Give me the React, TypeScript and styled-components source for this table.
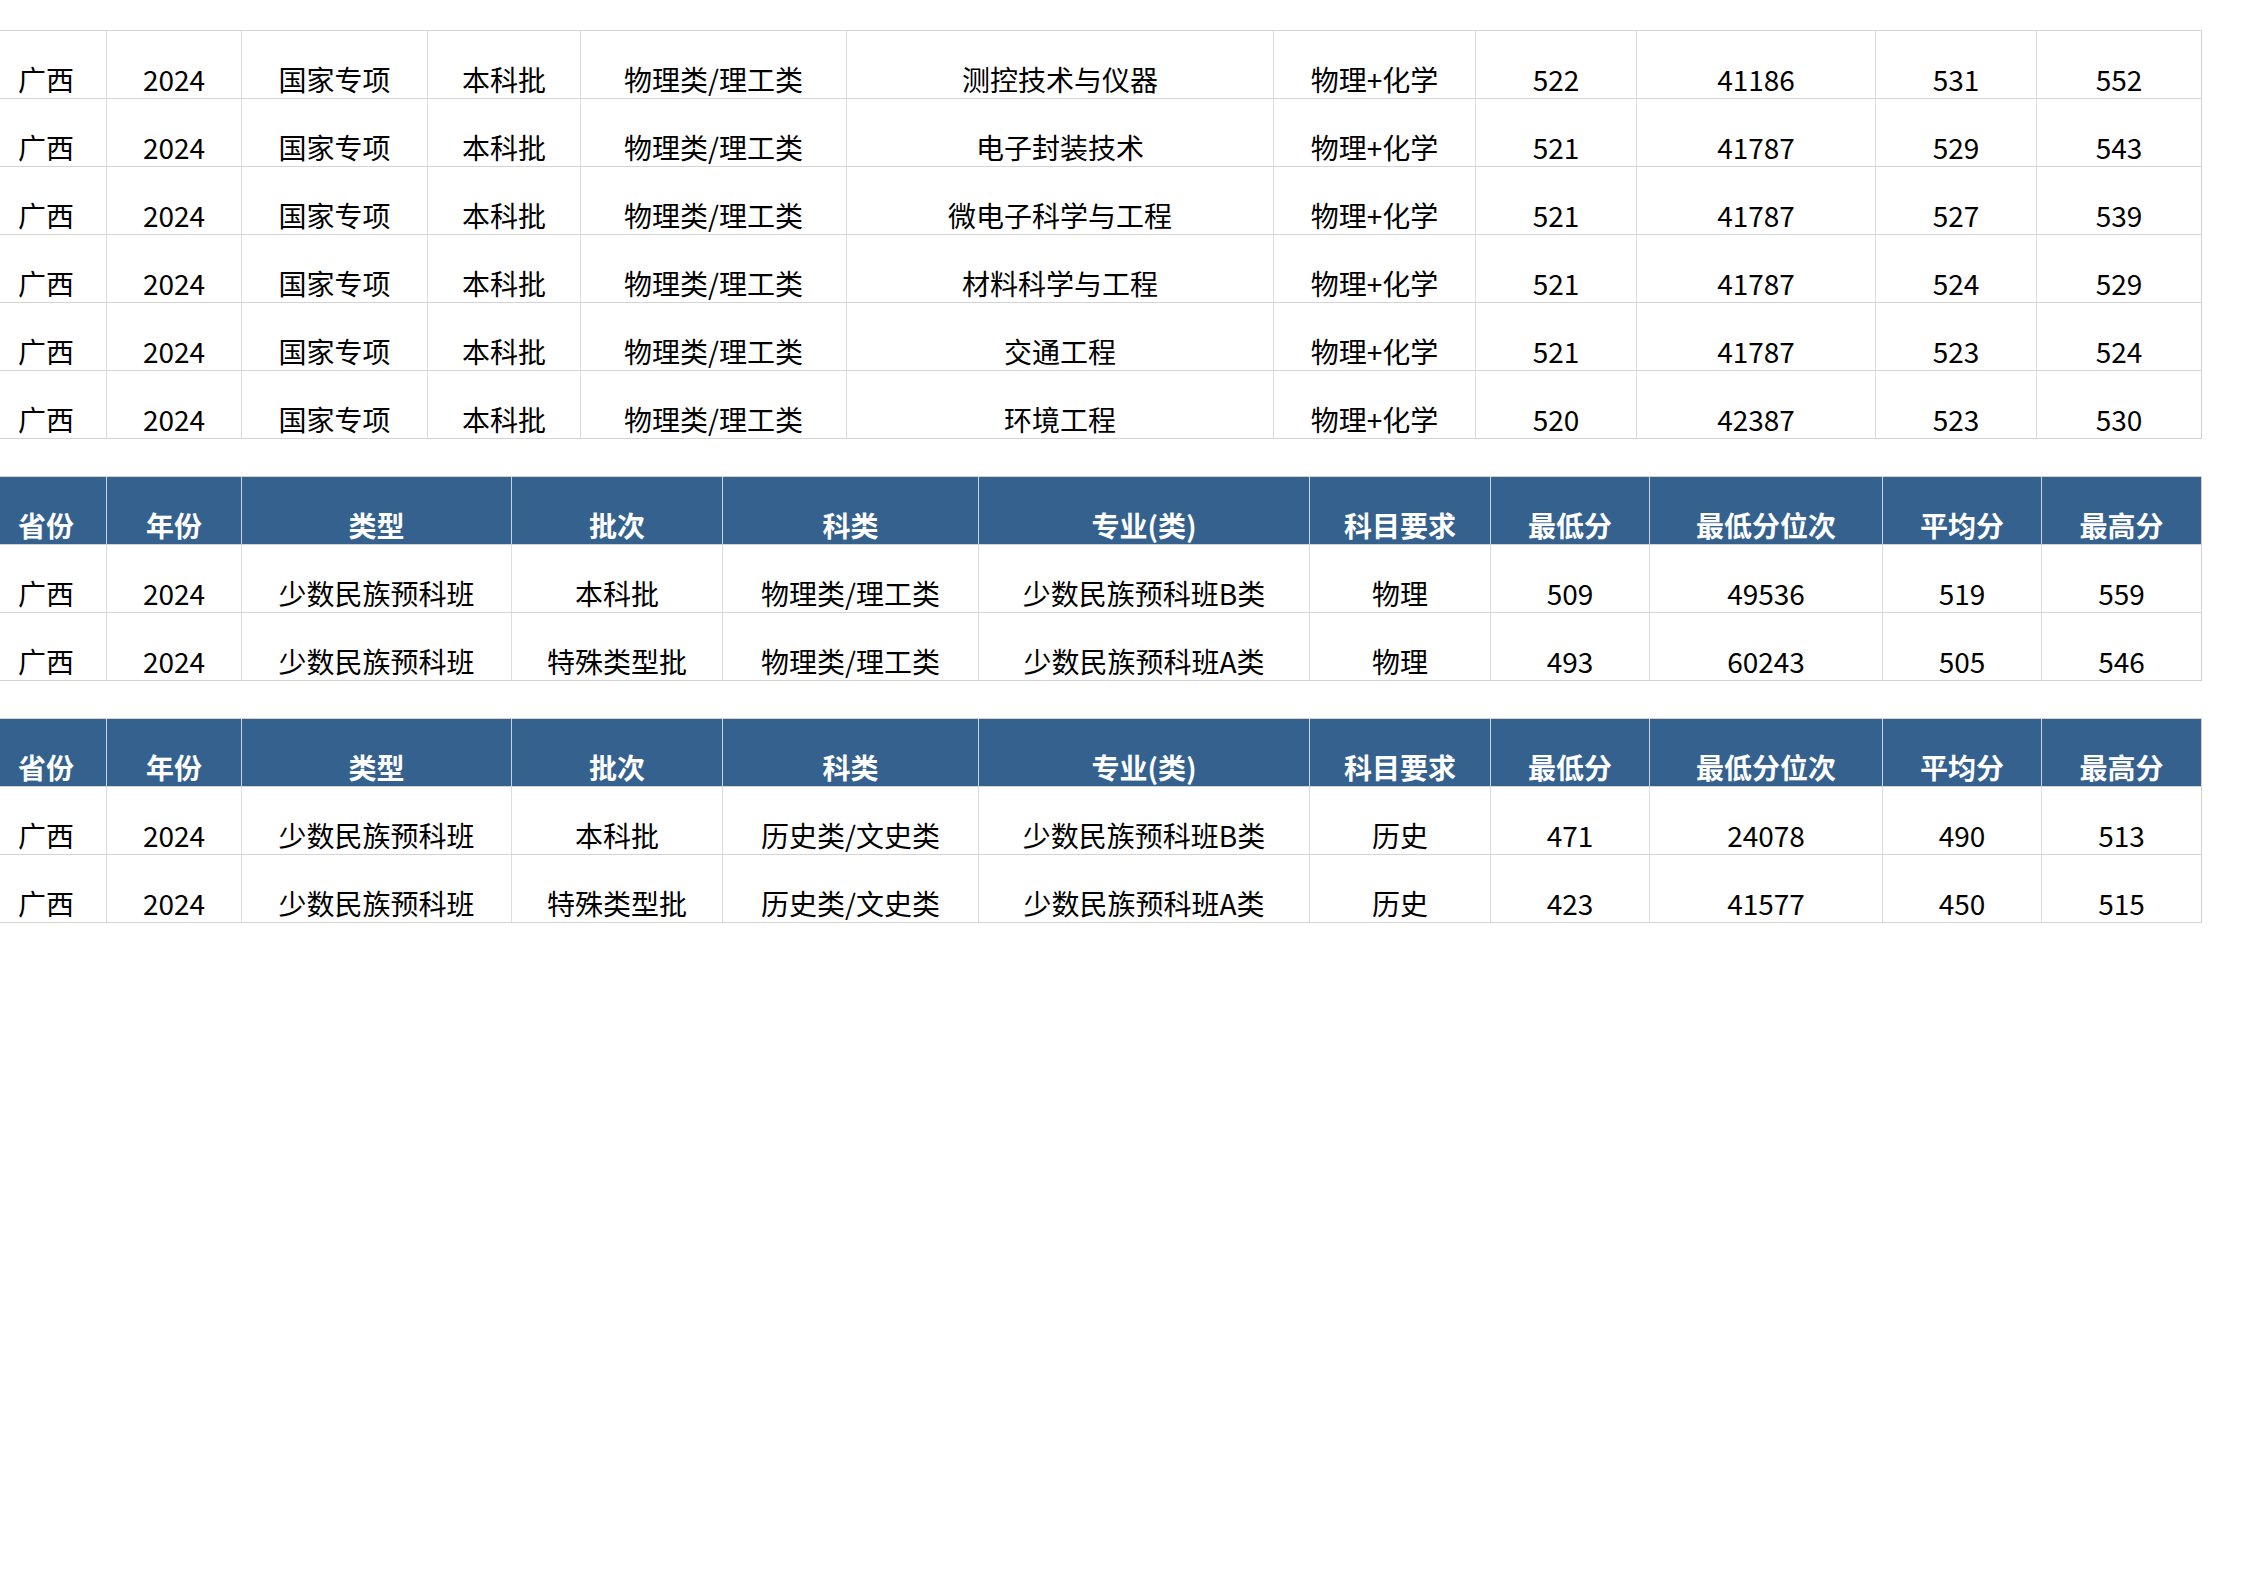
import styled, { createGlobalStyle } from "styled-components";

const GlobalStyle = createGlobalStyle`
    html, body {
        margin: 0;
        padding: 0;
        background: #fff;
        overflow: hidden;
    }
    body {
        font-family: "Noto Sans CJK SC", "Noto Sans", sans-serif;
    }
`

const topCols = [121, 135, 186, 153, 266, 427, 202, 161, 239, 161, 165]
const groupCols = [121, 135, 270, 211, 256, 331, 181, 159, 233, 159, 160]

const headers = ['省份', '年份', '类型', '批次', '科类', '专业(类)', '科目要求', '最低分', '最低分位次', '平均分', '最高分']

const topRows = [
    ['广西', '2024', '国家专项', '本科批', '物理类/理工类', '测控技术与仪器', '物理+化学', '522', '41186', '531', '552'],
    ['广西', '2024', '国家专项', '本科批', '物理类/理工类', '电子封装技术', '物理+化学', '521', '41787', '529', '543'],
    ['广西', '2024', '国家专项', '本科批', '物理类/理工类', '微电子科学与工程', '物理+化学', '521', '41787', '527', '539'],
    ['广西', '2024', '国家专项', '本科批', '物理类/理工类', '材料科学与工程', '物理+化学', '521', '41787', '524', '529'],
    ['广西', '2024', '国家专项', '本科批', '物理类/理工类', '交通工程', '物理+化学', '521', '41787', '523', '524'],
    ['广西', '2024', '国家专项', '本科批', '物理类/理工类', '环境工程', '物理+化学', '520', '42387', '523', '530'],
]

const scienceRows = [
    ['广西', '2024', '少数民族预科班', '本科批', '物理类/理工类', '少数民族预科班B类', '物理', '509', '49536', '519', '559'],
    ['广西', '2024', '少数民族预科班', '特殊类型批', '物理类/理工类', '少数民族预科班A类', '物理', '493', '60243', '505', '546'],
]

const artsRows = [
    ['广西', '2024', '少数民族预科班', '本科批', '历史类/文史类', '少数民族预科班B类', '历史', '471', '24078', '490', '513'],
    ['广西', '2024', '少数民族预科班', '特殊类型批', '历史类/文史类', '少数民族预科班A类', '历史', '423', '41577', '450', '515'],
]

interface TableProps {
    cols: number[]
    rows: string[][]
    withHeader?: boolean
}

function ScoreTable({ cols, rows, withHeader }: TableProps) {
    return <Table $cols={cols.map(c => c + 'px').join(' ')}>
        {withHeader && headers.map((h, i) => <HeadCell key={'h' + i}>{h}</HeadCell>)}
        {rows.map((r, ri) => r.map((v, ci) => <Cell key={ri + '-' + ci}>{v}</Cell>))}
    </Table>
}

export default function App() {
    return <>
        <GlobalStyle />
        <Page>
            <ScoreTable cols={topCols} rows={topRows} />
            <ScoreTable cols={groupCols} rows={scienceRows} withHeader />
            <ScoreTable cols={groupCols} rows={artsRows} withHeader />
        </Page>
    </>
}

const Page = styled.div`
    display: flex;
    flex-direction: column;
    gap: 37px;
    padding-top: 30px;
    margin-left: -14px;
    width: 2216px;
`

const Table = styled.div<{ $cols: string }>`
    display: grid;
    grid-template-columns: ${p => p.$cols};
    grid-auto-rows: 68px;
    border-top: 1px solid #d4d4d4;
`

const Cell = styled.div`
    box-sizing: border-box;
    display: flex;
    align-items: flex-end;
    justify-content: center;
    padding-bottom: 5px;
    border-right: 1px solid #dcdcdc;
    border-bottom: 1px solid #d4d4d4;
    font-size: 28px;
    line-height: 1;
    color: #000;
    white-space: nowrap;
    &:nth-child(11n) {
        border-right-color: #d0d0d0;
    }
`

const HeadCell = styled(Cell)`
    background: #35618f;
    color: #fff;
    font-weight: 700;
    border-right-color: #c9d3de;
    border-bottom-color: #d4d4d4;
    &:nth-child(11n) {
        border-right-color: #d0d0d0;
    }
`
